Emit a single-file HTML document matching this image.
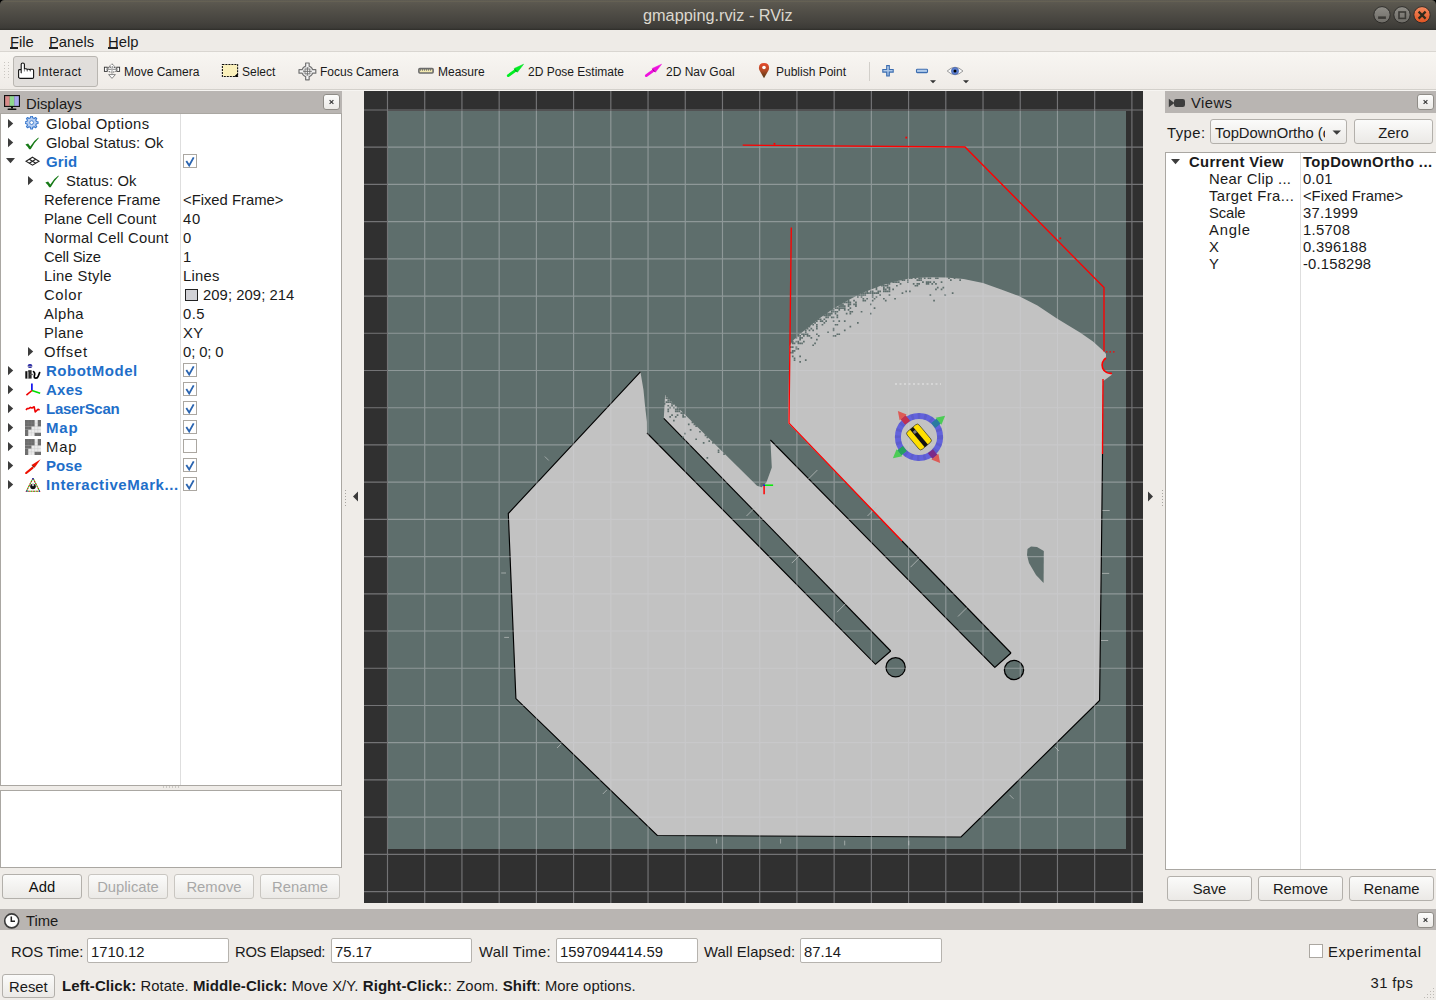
<!DOCTYPE html>
<html><head><meta charset="utf-8"><title>RViz</title>
<style>
html,body{margin:0;padding:0;}
body{width:1436px;height:1000px;position:relative;overflow:hidden;background:#efece8;font-family:"Liberation Sans",sans-serif;color:#1a1a1a;font-size:14.8px;}
.a{position:absolute;}
.t{position:absolute;white-space:nowrap;line-height:1;}
.btn{position:absolute;box-sizing:border-box;border:1px solid #b3b0ab;border-radius:3px;background:linear-gradient(#fbfbfa,#ebe9e6);}
.inp{position:absolute;box-sizing:border-box;border:1px solid #b6b3ae;border-radius:2px;background:#fff;}
.hdr{position:absolute;background:#b9b5b2;}
.cb{position:absolute;box-sizing:border-box;width:14px;height:14px;border:1px solid #aba7a1;background:#fff;}
</style></head><body>
<div class="a" style="left:0;top:0;width:1436px;height:30px;background:linear-gradient(#5f5c53 0px,#57544c 6px,#45433e 22px,#3c3b37 28px,#2f2e2a 30px);"></div>
<div class="a" style="left:3px;top:1px;width:1430px;height:1px;background:#6a6656;opacity:.6"></div>
<svg class="a" style="left:0;top:0" width="1436" height="6"><path d="M0 0 H4.5 A4.5 4.5 0 0 0 0 4.5 Z" fill="#000"/><path d="M1431.5 0 H1436 V4.5 A4.5 4.5 0 0 0 1431.5 0 Z" fill="#000"/></svg>
<div class="t" style="left:643px;top:6.5px;font-size:16.3px;color:#dcd8cf;">gmapping.rviz - RViz</div>
<svg class="a" style="left:1370px;top:3px" width="64" height="24" viewBox="0 0 64 24">
  <defs>
    <linearGradient id="gb" x1="0" y1="0" x2="0" y2="1"><stop offset="0" stop-color="#8e8c86"/><stop offset="1" stop-color="#6e6c67"/></linearGradient>
    <linearGradient id="gr" x1="0" y1="0" x2="0" y2="1"><stop offset="0" stop-color="#f58a5f"/><stop offset="1" stop-color="#df5321"/></linearGradient>
  </defs>
  <circle cx="12" cy="11.8" r="8.2" fill="url(#gb)" stroke="#2e2d2a" stroke-width="1"/>
  <rect x="8.1" y="13.4" width="7.8" height="2.5" fill="#3b3a36"/>
  <circle cx="32" cy="11.8" r="8.2" fill="url(#gb)" stroke="#2e2d2a" stroke-width="1"/>
  <rect x="29" y="9" width="6.4" height="6.4" fill="none" stroke="#3b3a36" stroke-width="1.6"/>
  <circle cx="52" cy="11.8" r="8.2" fill="url(#gr)" stroke="#2e2d2a" stroke-width="1"/>
  <path d="M48.6 8.6 L55.6 15.6 M55.6 8.6 L48.6 15.6" stroke="#2f2a1c" stroke-width="2.2"/>
</svg>
<div class="a" style="left:0;top:30px;width:1436px;height:21px;background:#eeebe7;"></div>
<div class="a" style="left:0;top:51px;width:1436px;height:1px;background:#d9d6d1;"></div>
<div class="a" style="left:0;top:52px;width:1436px;height:37px;background:linear-gradient(#f8f6f2,#efebe7);"></div>
<div class="a" style="left:0;top:90px;width:1436px;height:1px;background:#f7f5f2;"></div>
<div class="a" style="left:0;top:89px;width:1436px;height:1px;background:#d3d0cb;"></div>
<div class="t" style="left:10px;top:35px;font-size:14.8px;">File</div>
<div class="a" style="left:10px;top:47px;width:8px;height:1.5px;background:#222"></div>
<div class="t" style="left:49px;top:35px;font-size:14.8px;">Panels</div>
<div class="a" style="left:49px;top:47px;width:9px;height:1.5px;background:#222"></div>
<div class="t" style="left:108px;top:35px;font-size:14.8px;">Help</div>
<div class="a" style="left:108px;top:47px;width:10px;height:1.5px;background:#222"></div>
<!-- toolbar handle dots -->
<svg class="a" style="left:4px;top:62px" width="6" height="18"><g fill="#c9c6c1">
<rect x="0" y="0" width="1" height="1"/><rect x="4" y="0" width="1" height="1"/>
<rect x="0" y="3" width="1" height="1"/><rect x="4" y="3" width="1" height="1"/>
<rect x="0" y="6" width="1" height="1"/><rect x="4" y="6" width="1" height="1"/>
<rect x="0" y="9" width="1" height="1"/><rect x="4" y="9" width="1" height="1"/>
<rect x="0" y="12" width="1" height="1"/><rect x="4" y="12" width="1" height="1"/>
<rect x="0" y="15" width="1" height="1"/><rect x="4" y="15" width="1" height="1"/>
</g></svg>
<div class="a" style="left:13px;top:56px;width:85px;height:31px;box-sizing:border-box;border:1px solid #b9b6b1;border-radius:3px;background:#e1dedb;"></div>
<!-- toolbar icons -->
<svg class="a" style="left:14px;top:58px" width="30" height="26" viewBox="0 0 30 26">
  <path d="M7.2 15 V6.2 Q7.2 5 8.8 5 Q10.4 5 10.4 6.2 V10.8 H12.2 Q13.2 10.8 13.2 12 V11.2 H15.2 Q16.2 11.2 16.2 12.2 V11.2 H18.4 Q19.6 11.2 19.6 12.5 V19.3 Q19.6 20.4 18.4 20.4 H6.4 Q5.6 20.4 4.6 19.3 V12.5 Q4.6 11.6 5.6 11.6 H7.2" fill="#fff" stroke="#111" stroke-width="1.1" stroke-linejoin="round"/>
  <path d="M7.4 11.6 V15.5 M10.4 10.8 V13.5 M13.3 11.5 V13.6 M16.3 11.5 V13.6" stroke="#555" stroke-width="0.7"/>
</svg>
<div class="t" style="left:38px;top:66px;font-size:12px;letter-spacing:0.45px;">Interact</div>
<svg class="a" style="left:100px;top:58px" width="30" height="26" viewBox="0 0 30 26">
  <path d="M12 5.8 L15.6 9.3 H8.4 Z" fill="#fff" stroke="#444" stroke-width="0.9" stroke-dasharray="1.2 0.7"/>
  <rect x="4.4" y="9.2" width="2.8" height="4.2" fill="#fff" stroke="#333" stroke-width="0.9"/>
  <rect x="16.8" y="9.2" width="2.8" height="4.2" fill="#fff" stroke="#333" stroke-width="0.9"/>
  <ellipse cx="12" cy="11.6" rx="4.8" ry="2.5" fill="#fff" stroke="#333" stroke-width="0.9" stroke-dasharray="1.2 0.7"/>
  <path d="M7.2 11.3 H16.8" stroke="#666" stroke-width="0.8"/>
  <path d="M12 9.6 V16.4" stroke="#b5b5b5" stroke-width="1.3"/>
  <path d="M8.6 16.6 H15.4 L12 20.4 Z" fill="#fff" stroke="#777" stroke-width="0.9"/>
</svg>
<div class="t" style="left:124px;top:66px;font-size:12px;">Move Camera</div>
<svg class="a" style="left:216px;top:58px" width="30" height="26" viewBox="0 0 30 26">
  <rect x="6.4" y="6.5" width="15.2" height="12" fill="#fbf1bc" stroke="#111" stroke-width="1.1" stroke-dasharray="2 1"/>
  <path d="M21.8 15 V18.8 H18 Z" fill="#000"/>
</svg>
<div class="t" style="left:242px;top:66px;font-size:12px;">Select</div>
<svg class="a" style="left:294px;top:58px" width="30" height="26" viewBox="0 0 30 26">
  <path d="M18.61 11.65 L21.80 11.65 L21.80 15.15 L18.61 15.15 L18.28 15.93 L17.84 16.65 L17.29 17.29 L16.65 17.84 L15.93 18.28 L15.15 18.61 L15.15 21.80 L11.65 21.80 L11.65 18.61 L10.87 18.28 L10.15 17.84 L9.51 17.29 L8.96 16.65 L8.52 15.93 L8.19 15.15 L5.00 15.15 L5.00 11.65 L8.19 11.65 L8.52 10.87 L8.96 10.15 L9.51 9.51 L10.15 8.96 L10.87 8.52 L11.65 8.19 L11.65 5.00 L15.15 5.00 L15.15 8.19 L15.93 8.52 L16.65 8.96 L17.29 9.51 L17.84 10.15 L18.28 10.87 Z" fill="#f6f6f6" stroke="#727272" stroke-width="1.2" stroke-linejoin="round"/>
  <circle cx="13.4" cy="13.4" r="4" fill="none" stroke="#9a9a9a" stroke-width="0.8" stroke-dasharray="0.9 0.7"/>
  <path d="M11 11 h4.8 v4.8 h-4.8 z M13.4 9.2 v8.4 M9.2 13.4 h8.4" fill="none" stroke="#6e6e6e" stroke-width="0.9"/>
</svg>
<div class="t" style="left:320px;top:66px;font-size:12px;">Focus Camera</div>
<svg class="a" style="left:412px;top:58px" width="30" height="26" viewBox="0 0 30 26">
  <rect x="6.9" y="10.6" width="14.2" height="4.4" rx="1" fill="#f1e8b0" stroke="#6b6b6b" stroke-width="1.6"/>
  <path d="M8.5 11 v1.8 M10.5 11 v1.8 M12.5 11 v1.8 M14.5 11 v1.8 M16.5 11 v1.8 M18.5 11 v1.8" stroke="#6b6b6b" stroke-width="0.8"/>
</svg>
<div class="t" style="left:438px;top:66px;font-size:12px;">Measure</div>
<svg class="a" style="left:502px;top:58px" width="30" height="26" viewBox="0 0 30 26">
  <path d="M6.3 17.6 L13.6 12.4" stroke="#00ee22" stroke-width="2.8" stroke-linecap="round"/>
  <path d="M21.6 6.2 L15.4 14.3 L12.1 10.5 Z" fill="#00ee22" stroke="#00dd22" stroke-width="0.5"/>
  <path d="M12.5 11.2 L15 13.8" stroke="#0a7a1a" stroke-width="1"/>
</svg>
<div class="t" style="left:528px;top:66px;font-size:12px;">2D Pose Estimate</div>
<svg class="a" style="left:640px;top:58px" width="30" height="26" viewBox="0 0 30 26">
  <path d="M6.3 17.6 L13.6 12.4" stroke="#ee11dd" stroke-width="2.8" stroke-linecap="round"/>
  <path d="M21.6 6.2 L15.4 14.3 L12.1 10.5 Z" fill="#ee11dd" stroke="#ee11dd" stroke-width="0.5"/>
  <path d="M12.5 11.2 L15 13.8" stroke="#8a0a7a" stroke-width="1"/>
</svg>
<div class="t" style="left:666px;top:66px;font-size:12px;">2D Nav Goal</div>
<svg class="a" style="left:752px;top:58px" width="30" height="26" viewBox="0 0 30 26">
  <defs><linearGradient id="pin" x1="0" y1="0" x2="0" y2="1"><stop offset="0" stop-color="#e84a2c"/><stop offset="0.5" stop-color="#b24a26"/><stop offset="1" stop-color="#4a3510"/></linearGradient></defs>
  <path d="M12 20.3 L7.6 12.5 Q6.9 11.2 6.9 9.9 Q6.9 4.9 12 4.9 Q17.1 4.9 17.1 9.9 Q17.1 11.2 16.4 12.5 Z" fill="url(#pin)"/>
  <circle cx="12" cy="9.5" r="1.8" fill="#fff"/>
</svg>
<div class="t" style="left:776px;top:66px;font-size:12px;">Publish Point</div>
<div class="a" style="left:869px;top:62px;width:1px;height:19px;background:#d2cfca"></div>
<svg class="a" style="left:876px;top:58px" width="100" height="30" viewBox="0 0 100 30">
  <defs><linearGradient id="bl" x1="0" y1="0" x2="0" y2="1"><stop offset="0" stop-color="#c9dcf2"/><stop offset="1" stop-color="#8fb2de"/></linearGradient></defs>
  <path d="M11.4 7.6 h2.6 v3.9 h3.9 v2.6 h-3.9 v3.9 h-2.6 v-3.9 h-3.9 v-2.6 h3.9 z" fill="url(#bl)" stroke="#3c6db0" stroke-width="1.1" transform="translate(-0.7,0)"/>
  <rect x="40.5" y="11.3" width="11" height="3.3" rx="0.8" fill="url(#bl)" stroke="#3c6db0" stroke-width="1.1"/>
  <path d="M54 22.2 h6 l-3 3 z" fill="#333"/>
  <path d="M71.2 13 Q79 5.5 87 13 Q79 20.5 71.2 13 Z" fill="#f8f8f8" stroke="#9a9a9a" stroke-width="1"/>
  <circle cx="79" cy="13" r="3.6" fill="#5b7fd0" stroke="#3a5aa8" stroke-width="0.6"/>
  <circle cx="79" cy="13" r="1.5" fill="#000"/>
  <path d="M87 22.2 h6 l-3 3 z" fill="#333"/>
</svg>
<div class="hdr" style="left:0;top:91px;width:342px;height:22px;"></div>
<svg class="a" style="left:3px;top:94px" width="18" height="18" viewBox="0 0 18 18"><rect x="1.5" y="1.5" width="15" height="11" fill="#444" stroke="#111" stroke-width="1"/><rect x="2.2" y="2.2" width="4.5" height="9.6" fill="#d88a8a"/><rect x="6.7" y="2.2" width="4.6" height="9.6" fill="#8fd88f"/><rect x="11.3" y="2.2" width="4.5" height="9.6" fill="#a8a8ee"/><rect x="8" y="12.5" width="2" height="2" fill="#111"/><rect x="4.5" y="14.5" width="9" height="1.6" rx="0.8" fill="#111"/></svg>
<div class="t" style="left:26px;top:96.5px;font-size:14.8px;">Displays</div>
<svg width="0" height="0" style="position:absolute"><defs><linearGradient id="cbg" x1="0" y1="0" x2="0" y2="1"><stop offset="0" stop-color="#fdfdfc"/><stop offset="1" stop-color="#ebe9e6"/></linearGradient></defs></svg>
<svg class="a" style="left:322.5px;top:93.5px" width="17" height="16"><rect x="0.5" y="0.5" width="16" height="15" rx="2.5" fill="url(#cbg)" stroke="#8f8c87" stroke-width="1"/><path d="M6.6 6.1 L10.4 9.9 M10.4 6.1 L6.6 9.9" stroke="#3a3a3a" stroke-width="1.15"/></svg>
<div class="a" style="left:0;top:113px;width:342px;height:673px;box-sizing:border-box;border:1px solid #aaa7a2;background:#fff;"></div>
<div class="a" style="left:180px;top:114px;width:1px;height:671px;background:#dedede;"></div>
<svg class="a" style="left:8px;top:118.9px" width="6" height="10"><path d="M0 0 L5.2 4.6 L0 9.2 Z" fill="#3c3c3c"/></svg>
<svg class="a" style="left:25px;top:115.5px" width="16" height="16" viewBox="0 0 16 16"><g transform="translate(6.6,6.6)"><path d="M4.78 -1.07 L6.45 -0.84 L6.45 0.84 L4.78 1.07 L4.14 2.63 L5.15 3.96 L3.96 5.15 L2.63 4.14 L1.07 4.78 L0.84 6.45 L-0.84 6.45 L-1.07 4.78 L-2.63 4.14 L-3.96 5.15 L-5.15 3.96 L-4.14 2.63 L-4.78 1.07 L-6.45 0.84 L-6.45 -0.84 L-4.78 -1.07 L-4.14 -2.63 L-5.15 -3.96 L-3.96 -5.15 L-2.63 -4.14 L-1.07 -4.78 L-0.84 -6.45 L0.84 -6.45 L1.07 -4.78 L2.63 -4.14 L3.96 -5.15 L5.15 -3.96 L4.14 -2.63 Z" fill="#b7cff2" stroke="#3a78cc" stroke-width="1.1" stroke-linejoin="round"/><circle r="1.9" fill="#fff" stroke="#3a78cc" stroke-width="0.9"/></g></svg>
<div class="t" style="left:46px;top:117.0px;letter-spacing:0.40px;">Global Options</div>
<svg class="a" style="left:8px;top:137.9px" width="6" height="10"><path d="M0 0 L5.2 4.6 L0 9.2 Z" fill="#3c3c3c"/></svg>
<svg class="a" style="left:25px;top:134.5px" width="16" height="16" viewBox="0 0 16 16"><path d="M0.4 9.6 Q1.8 9.0 3.1 8.4 L5.3 11.4 Q8.6 5.6 13.4 2.4 L13.7 3.2 Q9.3 7.4 5.7 14.2 Q5.0 14.3 4.2 14.3 Q2.6 11.6 0.4 9.6 Z" fill="#177a17"/></svg>
<div class="t" style="left:46px;top:136.0px;letter-spacing:0.09px;">Global Status: Ok</div>
<svg class="a" style="left:6px;top:158.3px" width="10" height="6"><path d="M0 0 L9 0 L4.5 5.2 Z" fill="#3c3c3c"/></svg>
<svg class="a" style="left:25px;top:153.5px" width="16" height="16" viewBox="0 0 16 16"><g fill="none" stroke="#222" stroke-width="1.1"><path d="M7.5 3.2 L14 7.2 L7.5 11.2 L1 7.2 Z"/><path d="M4.25 5.2 L10.75 9.2 M10.75 5.2 L4.25 9.2"/></g></svg>
<div class="t" style="left:46px;top:153.9px;font-weight:bold;color:#1f6fc9;font-size:15px;letter-spacing:0.07px;">Grid</div>
<div class="cb" style="left:183px;top:154.2px;"></div>
<svg class="a" style="left:185px;top:156.9px" width="11" height="11"><path d="M1.3 4.0 L4.2 8.4 L8.7 0.4" fill="none" stroke="#2a64b0" stroke-width="1.8"/></svg>
<svg class="a" style="left:28px;top:175.9px" width="6" height="10"><path d="M0 0 L5.2 4.6 L0 9.2 Z" fill="#3c3c3c"/></svg>
<svg class="a" style="left:45px;top:172.5px" width="16" height="16" viewBox="0 0 16 16"><path d="M0.4 9.6 Q1.8 9.0 3.1 8.4 L5.3 11.4 Q8.6 5.6 13.4 2.4 L13.7 3.2 Q9.3 7.4 5.7 14.2 Q5.0 14.3 4.2 14.3 Q2.6 11.6 0.4 9.6 Z" fill="#177a17"/></svg>
<div class="t" style="left:66px;top:174.0px;letter-spacing:0.16px;">Status: Ok</div>
<div class="t" style="left:44px;top:193.0px;letter-spacing:0.09px;">Reference Frame</div>
<div class="t" style="left:183px;top:193.0px;letter-spacing:0.00px;">&lt;Fixed Frame&gt;</div>
<div class="t" style="left:44px;top:212.0px;letter-spacing:0.09px;">Plane Cell Count</div>
<div class="t" style="left:183px;top:212.0px;letter-spacing:0.80px;">40</div>
<div class="t" style="left:44px;top:231.0px;letter-spacing:0.22px;">Normal Cell Count</div>
<div class="t" style="left:183px;top:231.0px;letter-spacing:0.00px;">0</div>
<div class="t" style="left:44px;top:250.0px;letter-spacing:-0.19px;">Cell Size</div>
<div class="t" style="left:183px;top:250.0px;letter-spacing:0.00px;">1</div>
<div class="t" style="left:44px;top:269.0px;letter-spacing:0.28px;">Line Style</div>
<div class="t" style="left:183px;top:269.0px;letter-spacing:0.27px;">Lines</div>
<div class="t" style="left:44px;top:288.0px;letter-spacing:0.68px;">Color</div>
<div class="a" style="left:185px;top:288.5px;width:13px;height:12px;box-sizing:border-box;border:1px solid #222;background:#d1d1d6;"></div>
<div class="t" style="left:203px;top:288.0px;letter-spacing:0.07px;">209; 209; 214</div>
<div class="t" style="left:44px;top:307.0px;letter-spacing:0.43px;">Alpha</div>
<div class="t" style="left:183px;top:307.0px;letter-spacing:0.50px;">0.5</div>
<div class="t" style="left:44px;top:326.0px;letter-spacing:0.38px;">Plane</div>
<div class="t" style="left:183px;top:326.0px;letter-spacing:0.30px;">XY</div>
<svg class="a" style="left:28px;top:346.9px" width="6" height="10"><path d="M0 0 L5.2 4.6 L0 9.2 Z" fill="#3c3c3c"/></svg>
<div class="t" style="left:44px;top:345.0px;letter-spacing:0.80px;">Offset</div>
<div class="t" style="left:183px;top:345.0px;letter-spacing:-0.10px;">0; 0; 0</div>
<svg class="a" style="left:8px;top:365.9px" width="6" height="10"><path d="M0 0 L5.2 4.6 L0 9.2 Z" fill="#3c3c3c"/></svg>
<svg class="a" style="left:25px;top:362.5px" width="16" height="16" viewBox="0 0 16 16"><ellipse cx="5" cy="3" rx="2.4" ry="1.9" fill="#1a1aa0"/><path d="M2.8 3.3 H7.3" stroke="#e8e6c8" stroke-width="0.7"/><rect x="0.3" y="8.2" width="2.2" height="7.4" fill="#111"/><rect x="3.2" y="7.2" width="3.4" height="8.4" fill="#2a2a2a"/><rect x="2.6" y="9" width="0.8" height="6.4" fill="#bbb"/><path d="M5 11.5 H7.8" stroke="#555" stroke-width="1.2"/><path d="M8.6 8.6 Q10 9.6 9.6 11.8 Q8.8 14.6 10 15 Q12.4 15.6 13.2 13.2 L14.6 9.6" fill="none" stroke="#000" stroke-width="1.7" stroke-linecap="round"/></svg>
<div class="t" style="left:46px;top:362.9px;font-weight:bold;color:#1f6fc9;font-size:15px;letter-spacing:0.51px;">RobotModel</div>
<div class="cb" style="left:183px;top:363.2px;"></div>
<svg class="a" style="left:185px;top:365.9px" width="11" height="11"><path d="M1.3 4.0 L4.2 8.4 L8.7 0.4" fill="none" stroke="#2a64b0" stroke-width="1.8"/></svg>
<svg class="a" style="left:8px;top:384.9px" width="6" height="10"><path d="M0 0 L5.2 4.6 L0 9.2 Z" fill="#3c3c3c"/></svg>
<svg class="a" style="left:25px;top:381.5px" width="16" height="16" viewBox="0 0 16 16"><path d="M6.9 1.5 V8.5" stroke="#0000ee" stroke-width="1.6"/><path d="M6.9 8.5 L15.2 11.2" stroke="#00dd00" stroke-width="1.6"/><path d="M6.9 8.5 L1.4 13.2" stroke="#ee0000" stroke-width="1.6"/></svg>
<div class="t" style="left:46px;top:381.9px;font-weight:bold;color:#1f6fc9;font-size:15px;letter-spacing:0.23px;">Axes</div>
<div class="cb" style="left:183px;top:382.2px;"></div>
<svg class="a" style="left:185px;top:384.9px" width="11" height="11"><path d="M1.3 4.0 L4.2 8.4 L8.7 0.4" fill="none" stroke="#2a64b0" stroke-width="1.8"/></svg>
<svg class="a" style="left:8px;top:403.9px" width="6" height="10"><path d="M0 0 L5.2 4.6 L0 9.2 Z" fill="#3c3c3c"/></svg>
<svg class="a" style="left:25px;top:400.5px" width="16" height="16" viewBox="0 0 16 16"><path d="M1 9 L2.2 7.6 L4 7.4 L5.4 6.4 L7 7 L9.2 5.8 L10.2 10.9 L11.6 9.6 L13 8.2 L14.6 9" fill="none" stroke="#ee0000" stroke-width="1.6" stroke-linejoin="round"/></svg>
<div class="t" style="left:46px;top:400.9px;font-weight:bold;color:#1f6fc9;font-size:15px;letter-spacing:-0.28px;">LaserScan</div>
<div class="cb" style="left:183px;top:401.2px;"></div>
<svg class="a" style="left:185px;top:403.9px" width="11" height="11"><path d="M1.3 4.0 L4.2 8.4 L8.7 0.4" fill="none" stroke="#2a64b0" stroke-width="1.8"/></svg>
<svg class="a" style="left:8px;top:422.9px" width="6" height="10"><path d="M0 0 L5.2 4.6 L0 9.2 Z" fill="#3c3c3c"/></svg>
<svg class="a" style="left:25px;top:419.5px" width="16" height="16" viewBox="0 0 16 16"><rect x="0" y="0" width="16" height="16" fill="#ebebeb"/><g fill="#6d6d6d"><rect x="0" y="0" width="9.6" height="6.4"/><rect x="12.8" y="0" width="3.2" height="6.4"/><rect x="0" y="6.4" width="6.4" height="3.2"/><rect x="0" y="9.6" width="3.2" height="6.4"/><rect x="9.6" y="12.8" width="6.4" height="3.2"/></g><g stroke="#999" stroke-width="0.3" opacity="0.6"><path d="M3.2 0V16M6.4 0V16M9.6 0V16M12.8 0V16M0 3.2H16M0 6.4H16M0 9.6H16M0 12.8H16"/></g></svg>
<div class="t" style="left:46px;top:419.9px;font-weight:bold;color:#1f6fc9;font-size:15px;letter-spacing:0.80px;">Map</div>
<div class="cb" style="left:183px;top:420.2px;"></div>
<svg class="a" style="left:185px;top:422.9px" width="11" height="11"><path d="M1.3 4.0 L4.2 8.4 L8.7 0.4" fill="none" stroke="#2a64b0" stroke-width="1.8"/></svg>
<svg class="a" style="left:8px;top:441.9px" width="6" height="10"><path d="M0 0 L5.2 4.6 L0 9.2 Z" fill="#3c3c3c"/></svg>
<svg class="a" style="left:25px;top:438.5px" width="16" height="16" viewBox="0 0 16 16"><rect x="0" y="0" width="16" height="16" fill="#ebebeb"/><g fill="#6d6d6d"><rect x="0" y="0" width="9.6" height="6.4"/><rect x="12.8" y="0" width="3.2" height="6.4"/><rect x="0" y="6.4" width="6.4" height="3.2"/><rect x="0" y="9.6" width="3.2" height="6.4"/><rect x="9.6" y="12.8" width="6.4" height="3.2"/></g><g stroke="#999" stroke-width="0.3" opacity="0.6"><path d="M3.2 0V16M6.4 0V16M9.6 0V16M12.8 0V16M0 3.2H16M0 6.4H16M0 9.6H16M0 12.8H16"/></g></svg>
<div class="t" style="left:46px;top:440.0px;letter-spacing:0.80px;">Map</div>
<div class="cb" style="left:183px;top:439.2px;"></div>
<svg class="a" style="left:8px;top:460.9px" width="6" height="10"><path d="M0 0 L5.2 4.6 L0 9.2 Z" fill="#3c3c3c"/></svg>
<svg class="a" style="left:25px;top:457.5px" width="16" height="16" viewBox="0 0 16 16"><path d="M1.2 15 L7.5 9.8" stroke="#ee1100" stroke-width="2.2" stroke-linecap="round"/><path d="M15.6 1.3 L9.8 9.6 L6.6 7 Z" fill="#ee1100"/><path d="M6.8 7.4 L9.4 9.3" stroke="#661100" stroke-width="1"/></svg>
<div class="t" style="left:46px;top:457.9px;font-weight:bold;color:#1f6fc9;font-size:15px;letter-spacing:0.07px;">Pose</div>
<div class="cb" style="left:183px;top:458.2px;"></div>
<svg class="a" style="left:185px;top:460.9px" width="11" height="11"><path d="M1.3 4.0 L4.2 8.4 L8.7 0.4" fill="none" stroke="#2a64b0" stroke-width="1.8"/></svg>
<svg class="a" style="left:8px;top:479.9px" width="6" height="10"><path d="M0 0 L5.2 4.6 L0 9.2 Z" fill="#3c3c3c"/></svg>
<svg class="a" style="left:25px;top:476.5px" width="16" height="16" viewBox="0 0 16 16"><path d="M8 1.2 L14.6 14.2 H1.4 Z" fill="none" stroke="#dd0000" stroke-width="1.1" stroke-dasharray="1.5 1.2"/><path d="M8 1.2 L14.6 14.2 H1.4 Z" fill="none" stroke="#00cc00" stroke-width="1.1" stroke-dasharray="1.2 1.5" stroke-dashoffset="1.5"/><circle cx="8" cy="9.5" r="2.8" fill="#111"/><circle cx="8" cy="8" r="1.2" fill="#bbb"/><path d="M8 1 v1.5 M1.5 14.2 h1 M14 14.2 h1" stroke="#0022ee" stroke-width="1.2"/></svg>
<div class="t" style="left:46px;top:476.9px;font-weight:bold;color:#1f6fc9;font-size:15px;letter-spacing:0.56px;">InteractiveMark...</div>
<div class="cb" style="left:183px;top:477.2px;"></div>
<svg class="a" style="left:185px;top:479.9px" width="11" height="11"><path d="M1.3 4.0 L4.2 8.4 L8.7 0.4" fill="none" stroke="#2a64b0" stroke-width="1.8"/></svg>
<svg class="a" style="left:163px;top:786px" width="18" height="3"><g fill="#a8a5a0"><rect x="0" y="0.5" width="1" height="1"/><rect x="3" y="0.5" width="1" height="1"/><rect x="6" y="0.5" width="1" height="1"/><rect x="9" y="0.5" width="1" height="1"/><rect x="12" y="0.5" width="1" height="1"/><rect x="15" y="0.5" width="1" height="1"/></g></svg>
<div class="a" style="left:0;top:790px;width:342px;height:78px;box-sizing:border-box;border:1px solid #aaa7a2;background:#fff;"></div>
<div class="btn" style="left:2px;top:874px;width:80px;height:25px;"></div>
<div class="t" style="left:2px;top:880px;width:80px;text-align:center;color:#111;">Add</div>
<div class="btn" style="left:88px;top:874px;width:80px;height:25px;border-color:#c9c6c1;"></div>
<div class="t" style="left:88px;top:880px;width:80px;text-align:center;color:#a8a8a8;">Duplicate</div>
<div class="btn" style="left:174px;top:874px;width:80px;height:25px;border-color:#c9c6c1;"></div>
<div class="t" style="left:174px;top:880px;width:80px;text-align:center;color:#a8a8a8;">Remove</div>
<div class="btn" style="left:260px;top:874px;width:80px;height:25px;border-color:#c9c6c1;"></div>
<div class="t" style="left:260px;top:880px;width:80px;text-align:center;color:#a8a8a8;">Rename</div>
<svg class="a" style="left:344px;top:488px" width="16" height="20"><g fill="#a8a5a0"><rect x="1" y="2" width="1" height="1"/><rect x="1" y="5" width="1" height="1"/><rect x="1" y="8" width="1" height="1"/><rect x="1" y="11" width="1" height="1"/><rect x="1" y="14" width="1" height="1"/><rect x="1" y="17" width="1" height="1"/></g><path d="M9 8.5 L14 3.5 L14 13.5 Z" fill="#3a3a3a"/></svg>
<svg class="a" style="left:364px;top:91px" width="779" height="812" viewBox="0 0 779 812">
<defs><pattern id="hatch" width="3" height="3" patternUnits="userSpaceOnUse"><rect width="3" height="3" fill="#c2c2c2"/><rect x="0" y="0" width="1" height="1" fill="#5e6e6c"/></pattern></defs>
<rect width="779" height="812" fill="#303030"/>
<rect x="24" y="20" width="738" height="738" fill="#5e6e6c"/>
<path d="M144.3 422.5 L276.4 280.8 L279.5 299.0 L281.0 314.5 L282.9 330.7 L283.0 342.0 L511.5 573.3 L526.7 560.0 L299.8 327.3 L301.1 304.0 L393.0 394.8 L397.6 396.2 L402.4 391.5 L407.8 376.6 L406.4 349.0 L630.8 576.5 L647.0 562.0 L424.0 332.1 L425.5 255.0 L429.0 249.5 L436.0 243.0 L443.0 237.5 L456.0 227.0 L470.0 217.2 L484.0 209.2 L497.0 202.4 L516.0 194.9 L529.9 190.7 L546.6 187.2 L564.7 186.3 L581.5 186.5 L599.6 187.9 L619.0 192.1 L637.2 198.4 L655.3 205.3 L673.4 214.4 L692.9 227.6 L716.0 241.5 L729.0 250.5 L740.0 260.4 L742.0 263.0 L742.0 267.0 L740.7 268.1 L739.7 269.3 L738.9 270.7 L738.4 272.3 L738.2 273.9 L738.3 275.5 L738.8 277.0 L739.5 278.5 L740.5 279.8 L741.8 280.8 L743.2 281.6 L744.7 282.1 L746.3 282.3 L747.9 282.2 L747.5 284.0 L740.0 289.5 L739.0 290.0 L738.5 363.0 L737.8 429.0 L735.6 609.4 L597.0 746.0 L293.3 744.5 L151.9 607.6 Z" fill="#c2c2c2"/>
<path d="M663.5 458.0 L667.0 455.5 L673.0 456.0 L679.8 460.0 L679.6 492.0 L672.0 484.0 L665.0 472.0 L663.0 464.0 Z" fill="#5e6e6c"/>
<circle cx="531.6" cy="576.3" r="9.6" fill="#5e6e6c" stroke="#000" stroke-width="1.3"/>
<circle cx="650.0" cy="579.0" r="9.6" fill="#5e6e6c" stroke="#000" stroke-width="1.3"/>
<path d="M276.4 280.8 L144.3 422.5 L151.9 607.6 L293.3 744.5 L597.0 746.0 L735.6 609.4 L737.8 429.0 L738.5 363.0" fill="none" stroke="#000" stroke-width="1.15" stroke-linejoin="miter"/>
<path d="M283.0 342.0 L511.5 573.3 L526.7 560.0" fill="none" stroke="#000" stroke-width="1.15" stroke-linejoin="miter"/>
<path d="M299.8 327.3 L526.7 560.0" fill="none" stroke="#000" stroke-width="1.15" stroke-linejoin="miter"/>
<path d="M406.4 349.0 L630.8 576.5 L647.0 562.0" fill="none" stroke="#000" stroke-width="1.15" stroke-linejoin="miter"/>
<path d="M538.0 450.0 L647.0 562.0" fill="none" stroke="#000" stroke-width="1.15" stroke-linejoin="miter"/>
<path d="M545.0 186.4h1.7v1.7h-1.7z M546.9 186.4h1.7v1.7h-1.7z M550.6 186.4h1.7v1.7h-1.7z M554.3 186.4h1.7v1.7h-1.7z M556.2 186.4h1.7v1.7h-1.7z M559.9 186.4h1.7v1.7h-1.7z M563.6 186.4h1.7v1.7h-1.7z M565.5 186.4h1.7v1.7h-1.7z M571.1 186.4h1.7v1.7h-1.7z M572.9 186.4h1.7v1.7h-1.7z M584.1 186.4h1.7v1.7h-1.7z M589.7 186.4h1.7v1.7h-1.7z M537.6 188.3h1.7v1.7h-1.7z M539.5 188.3h1.7v1.7h-1.7z M543.2 188.3h1.7v1.7h-1.7z M552.5 188.3h1.7v1.7h-1.7z M554.3 188.3h1.7v1.7h-1.7z M556.2 188.3h1.7v1.7h-1.7z M586.0 188.3h1.7v1.7h-1.7z M595.3 188.3h1.7v1.7h-1.7z M528.3 190.2h1.7v1.7h-1.7z M530.2 190.2h1.7v1.7h-1.7z M532.0 190.2h1.7v1.7h-1.7z M533.9 190.2h1.7v1.7h-1.7z M543.2 190.2h1.7v1.7h-1.7z M558.1 190.2h1.7v1.7h-1.7z M561.8 190.2h1.7v1.7h-1.7z M563.6 190.2h1.7v1.7h-1.7z M565.5 190.2h1.7v1.7h-1.7z M569.2 190.2h1.7v1.7h-1.7z M576.7 190.2h1.7v1.7h-1.7z M522.7 192.0h1.7v1.7h-1.7z M524.6 192.0h1.7v1.7h-1.7z M535.7 192.0h1.7v1.7h-1.7z M548.8 192.0h1.7v1.7h-1.7z M552.5 192.0h1.7v1.7h-1.7z M554.3 192.0h1.7v1.7h-1.7z M561.8 192.0h1.7v1.7h-1.7z M563.6 192.0h1.7v1.7h-1.7z M567.4 192.0h1.7v1.7h-1.7z M571.1 192.0h1.7v1.7h-1.7z M517.1 193.9h1.7v1.7h-1.7z M519.0 193.9h1.7v1.7h-1.7z M520.9 193.9h1.7v1.7h-1.7z M522.7 193.9h1.7v1.7h-1.7z M532.0 193.9h1.7v1.7h-1.7z M550.6 193.9h1.7v1.7h-1.7z M552.5 193.9h1.7v1.7h-1.7z M511.6 195.7h1.7v1.7h-1.7z M519.0 195.7h1.7v1.7h-1.7z M522.7 195.7h1.7v1.7h-1.7z M524.6 195.7h1.7v1.7h-1.7z M572.9 195.7h1.7v1.7h-1.7z M578.5 195.7h1.7v1.7h-1.7z M511.6 197.6h1.7v1.7h-1.7z M519.0 197.6h1.7v1.7h-1.7z M520.9 197.6h1.7v1.7h-1.7z M524.6 197.6h1.7v1.7h-1.7z M528.3 197.6h1.7v1.7h-1.7z M571.1 197.6h1.7v1.7h-1.7z M576.7 197.6h1.7v1.7h-1.7z M502.3 199.5h1.7v1.7h-1.7z M506.0 199.5h1.7v1.7h-1.7z M507.8 199.5h1.7v1.7h-1.7z M513.4 199.5h1.7v1.7h-1.7z M515.3 199.5h1.7v1.7h-1.7z M519.0 199.5h1.7v1.7h-1.7z M520.9 199.5h1.7v1.7h-1.7z M522.7 199.5h1.7v1.7h-1.7z M524.6 199.5h1.7v1.7h-1.7z M541.3 199.5h1.7v1.7h-1.7z M545.0 199.5h1.7v1.7h-1.7z M496.7 201.3h1.7v1.7h-1.7z M498.5 201.3h1.7v1.7h-1.7z M500.4 201.3h1.7v1.7h-1.7z M502.3 201.3h1.7v1.7h-1.7z M504.1 201.3h1.7v1.7h-1.7z M506.0 201.3h1.7v1.7h-1.7z M507.8 201.3h1.7v1.7h-1.7z M509.7 201.3h1.7v1.7h-1.7z M511.6 201.3h1.7v1.7h-1.7z M513.4 201.3h1.7v1.7h-1.7z M537.6 201.3h1.7v1.7h-1.7z M587.8 201.3h1.7v1.7h-1.7z M493.0 203.2h1.7v1.7h-1.7z M494.8 203.2h1.7v1.7h-1.7z M496.7 203.2h1.7v1.7h-1.7z M498.5 203.2h1.7v1.7h-1.7z M500.4 203.2h1.7v1.7h-1.7z M507.8 203.2h1.7v1.7h-1.7z M515.3 203.2h1.7v1.7h-1.7z M524.6 203.2h1.7v1.7h-1.7z M565.5 203.2h1.7v1.7h-1.7z M580.4 203.2h1.7v1.7h-1.7z M493.0 205.0h1.7v1.7h-1.7z M496.7 205.0h1.7v1.7h-1.7z M507.8 205.0h1.7v1.7h-1.7z M511.6 205.0h1.7v1.7h-1.7z M498.5 206.9h1.7v1.7h-1.7z M502.3 206.9h1.7v1.7h-1.7z M509.7 206.9h1.7v1.7h-1.7z M519.0 206.9h1.7v1.7h-1.7z M530.2 206.9h1.7v1.7h-1.7z M483.7 208.8h1.7v1.7h-1.7z M489.2 208.8h1.7v1.7h-1.7z M498.5 208.8h1.7v1.7h-1.7z M500.4 208.8h1.7v1.7h-1.7z M507.8 208.8h1.7v1.7h-1.7z M520.9 208.8h1.7v1.7h-1.7z M569.2 208.8h1.7v1.7h-1.7z M479.9 210.6h1.7v1.7h-1.7z M481.8 210.6h1.7v1.7h-1.7z M483.7 210.6h1.7v1.7h-1.7z M485.5 210.6h1.7v1.7h-1.7z M491.1 210.6h1.7v1.7h-1.7z M476.2 212.5h1.7v1.7h-1.7z M478.1 212.5h1.7v1.7h-1.7z M483.7 212.5h1.7v1.7h-1.7z M485.5 212.5h1.7v1.7h-1.7z M489.2 212.5h1.7v1.7h-1.7z M491.1 212.5h1.7v1.7h-1.7z M506.0 212.5h1.7v1.7h-1.7z M474.4 214.3h1.7v1.7h-1.7z M476.2 214.3h1.7v1.7h-1.7z M478.1 214.3h1.7v1.7h-1.7z M479.9 214.3h1.7v1.7h-1.7z M483.7 214.3h1.7v1.7h-1.7z M491.1 214.3h1.7v1.7h-1.7z M470.6 216.2h1.7v1.7h-1.7z M472.5 216.2h1.7v1.7h-1.7z M474.4 216.2h1.7v1.7h-1.7z M476.2 216.2h1.7v1.7h-1.7z M478.1 216.2h1.7v1.7h-1.7z M479.9 216.2h1.7v1.7h-1.7z M485.5 216.2h1.7v1.7h-1.7z M509.7 216.2h1.7v1.7h-1.7z M466.9 218.1h1.7v1.7h-1.7z M468.8 218.1h1.7v1.7h-1.7z M474.4 218.1h1.7v1.7h-1.7z M479.9 218.1h1.7v1.7h-1.7z M483.7 218.1h1.7v1.7h-1.7z M466.9 219.9h1.7v1.7h-1.7z M468.8 219.9h1.7v1.7h-1.7z M470.6 219.9h1.7v1.7h-1.7z M472.5 219.9h1.7v1.7h-1.7z M485.5 219.9h1.7v1.7h-1.7z M487.4 219.9h1.7v1.7h-1.7z M496.7 219.9h1.7v1.7h-1.7z M461.3 221.8h1.7v1.7h-1.7z M463.2 221.8h1.7v1.7h-1.7z M465.1 221.8h1.7v1.7h-1.7z M466.9 221.8h1.7v1.7h-1.7z M470.6 221.8h1.7v1.7h-1.7z M481.8 221.8h1.7v1.7h-1.7z M485.5 221.8h1.7v1.7h-1.7z M506.0 221.8h1.7v1.7h-1.7z M459.5 223.6h1.7v1.7h-1.7z M461.3 223.6h1.7v1.7h-1.7z M463.2 223.6h1.7v1.7h-1.7z M465.1 223.6h1.7v1.7h-1.7z M472.5 223.6h1.7v1.7h-1.7z M461.3 225.5h1.7v1.7h-1.7z M463.2 225.5h1.7v1.7h-1.7z M466.9 225.5h1.7v1.7h-1.7z M468.8 225.5h1.7v1.7h-1.7z M472.5 225.5h1.7v1.7h-1.7z M453.9 227.4h1.7v1.7h-1.7z M455.8 227.4h1.7v1.7h-1.7z M459.5 227.4h1.7v1.7h-1.7z M452.0 229.2h1.7v1.7h-1.7z M455.8 229.2h1.7v1.7h-1.7z M457.6 229.2h1.7v1.7h-1.7z M461.3 229.2h1.7v1.7h-1.7z M468.8 229.2h1.7v1.7h-1.7z M474.4 229.2h1.7v1.7h-1.7z M479.9 229.2h1.7v1.7h-1.7z M450.2 231.1h1.7v1.7h-1.7z M459.5 231.1h1.7v1.7h-1.7z M493.0 231.1h1.7v1.7h-1.7z M448.3 232.9h1.7v1.7h-1.7z M452.0 232.9h1.7v1.7h-1.7z M457.6 232.9h1.7v1.7h-1.7z M470.6 232.9h1.7v1.7h-1.7z M472.5 232.9h1.7v1.7h-1.7z M444.6 234.8h1.7v1.7h-1.7z M452.0 234.8h1.7v1.7h-1.7z M485.5 234.8h1.7v1.7h-1.7z M442.7 236.7h1.7v1.7h-1.7z M446.5 236.7h1.7v1.7h-1.7z M452.0 236.7h1.7v1.7h-1.7z M468.8 236.7h1.7v1.7h-1.7z M440.9 238.5h1.7v1.7h-1.7z M444.6 238.5h1.7v1.7h-1.7z M448.3 238.5h1.7v1.7h-1.7z M468.8 238.5h1.7v1.7h-1.7z M479.9 238.5h1.7v1.7h-1.7z M440.9 240.4h1.7v1.7h-1.7z M463.2 240.4h1.7v1.7h-1.7z M437.2 242.2h1.7v1.7h-1.7z M439.0 242.2h1.7v1.7h-1.7z M440.9 242.2h1.7v1.7h-1.7z M442.7 242.2h1.7v1.7h-1.7z M452.0 242.2h1.7v1.7h-1.7z M472.5 242.2h1.7v1.7h-1.7z M474.4 242.2h1.7v1.7h-1.7z M433.4 244.1h1.7v1.7h-1.7z M435.3 244.1h1.7v1.7h-1.7z M439.0 244.1h1.7v1.7h-1.7z M442.7 244.1h1.7v1.7h-1.7z M444.6 244.1h1.7v1.7h-1.7z M453.9 244.1h1.7v1.7h-1.7z M468.8 244.1h1.7v1.7h-1.7z M470.6 244.1h1.7v1.7h-1.7z M431.6 246.0h1.7v1.7h-1.7z M435.3 246.0h1.7v1.7h-1.7z M437.2 246.0h1.7v1.7h-1.7z M446.5 246.0h1.7v1.7h-1.7z M435.3 247.8h1.7v1.7h-1.7z M452.0 247.8h1.7v1.7h-1.7z M427.9 249.7h1.7v1.7h-1.7z M431.6 249.7h1.7v1.7h-1.7z M433.4 249.7h1.7v1.7h-1.7z M439.0 249.7h1.7v1.7h-1.7z M427.9 251.5h1.7v1.7h-1.7z M429.7 251.5h1.7v1.7h-1.7z M433.4 251.5h1.7v1.7h-1.7z M435.3 251.5h1.7v1.7h-1.7z M437.2 251.5h1.7v1.7h-1.7z M450.2 251.5h1.7v1.7h-1.7z M448.3 253.4h1.7v1.7h-1.7z M426.0 255.3h1.7v1.7h-1.7z M427.9 255.3h1.7v1.7h-1.7z M431.6 255.3h1.7v1.7h-1.7z M431.6 257.1h1.7v1.7h-1.7z M433.4 257.1h1.7v1.7h-1.7z M427.9 259.0h1.7v1.7h-1.7z M429.7 259.0h1.7v1.7h-1.7z M426.0 260.8h1.7v1.7h-1.7z M427.9 260.8h1.7v1.7h-1.7z M427.9 264.6h1.7v1.7h-1.7z M435.3 264.6h1.7v1.7h-1.7z M429.7 266.4h1.7v1.7h-1.7z M429.7 268.3h1.7v1.7h-1.7z M440.9 268.3h1.7v1.7h-1.7z M435.3 270.1h1.7v1.7h-1.7z M301.6 304.6h1.7v1.7h-1.7z M301.6 306.4h1.7v1.7h-1.7z M303.4 306.4h1.7v1.7h-1.7z M303.4 308.3h1.7v1.7h-1.7z M305.3 308.3h1.7v1.7h-1.7z M301.6 310.2h1.7v1.7h-1.7z M303.4 310.2h1.7v1.7h-1.7z M305.3 310.2h1.7v1.7h-1.7z M307.2 310.2h1.7v1.7h-1.7z M299.7 312.0h1.7v1.7h-1.7z M307.2 312.0h1.7v1.7h-1.7z M309.0 312.0h1.7v1.7h-1.7z M303.4 313.9h1.7v1.7h-1.7z M307.2 313.9h1.7v1.7h-1.7z M310.9 313.9h1.7v1.7h-1.7z M305.3 315.7h1.7v1.7h-1.7z M309.0 315.7h1.7v1.7h-1.7z M312.7 315.7h1.7v1.7h-1.7z M303.4 317.6h1.7v1.7h-1.7z M310.9 317.6h1.7v1.7h-1.7z M312.7 317.6h1.7v1.7h-1.7z M314.6 317.6h1.7v1.7h-1.7z M303.4 319.5h1.7v1.7h-1.7z M310.9 319.5h1.7v1.7h-1.7z M312.7 319.5h1.7v1.7h-1.7z M314.6 319.5h1.7v1.7h-1.7z M316.5 321.3h1.7v1.7h-1.7z M318.3 321.3h1.7v1.7h-1.7z M307.2 323.2h1.7v1.7h-1.7z M312.7 323.2h1.7v1.7h-1.7z M318.3 323.2h1.7v1.7h-1.7z M305.3 325.0h1.7v1.7h-1.7z M310.9 325.0h1.7v1.7h-1.7z M318.3 325.0h1.7v1.7h-1.7z M320.2 325.0h1.7v1.7h-1.7z M309.0 328.8h1.7v1.7h-1.7z M327.6 330.6h1.7v1.7h-1.7z M323.9 332.5h1.7v1.7h-1.7z M329.5 332.5h1.7v1.7h-1.7z M331.3 334.3h1.7v1.7h-1.7z M325.8 338.1h1.7v1.7h-1.7z M335.1 339.9h1.7v1.7h-1.7z M320.2 341.8h1.7v1.7h-1.7z M340.6 343.6h1.7v1.7h-1.7z M318.3 345.5h1.7v1.7h-1.7z M342.5 345.5h1.7v1.7h-1.7z M331.3 347.4h1.7v1.7h-1.7z M344.4 349.2h1.7v1.7h-1.7z M338.8 351.1h1.7v1.7h-1.7z M348.1 351.1h1.7v1.7h-1.7z M353.7 358.5h1.7v1.7h-1.7z M353.7 360.4h1.7v1.7h-1.7z M359.2 362.2h1.7v1.7h-1.7z M342.5 366.0h1.7v1.7h-1.7z" fill="#5e6e6c"/>
<path d="M391.5 416.0 l-9 9 M436.8 463.1 l-9 9 M482.0 512.2 l-9 9 M512.5 416.0 l-9 9 M555.5 467.2 l-9 9 M603.0 516.5 l-9 9 M453.3 379.1 l-9 9" stroke="#b9bdbc" stroke-width="1" opacity="0.8"/>
<path d="M184.8 369.5 l-4.0 -4.0 M142.0 482.0 l-4.8 0.0 M145.0 546.4 l-4.8 0.0 M197.0 653.0 l-4.0 4.0 M242.8 699.0 l-4.0 4.0 M352.6 747.8 l0.0 4.8 M416.6 747.8 l0.0 4.8 M480.7 749.6 l0.0 4.8 M544.8 749.6 l0.0 4.8 M645.5 703.8 l4.0 4.0 M691.0 656.0 l4.0 4.0 M738.5 419.5 l7.2 0.0 M738.0 482.4 l7.2 0.0 M737.0 549.5 l7.2 0.0" stroke="#d8d8d8" stroke-width="1" opacity="0.55"/>
<path d="M23.50 0 V812 M60.72 0 V812 M97.94 0 V812 M135.16 0 V812 M172.38 0 V812 M209.60 0 V812 M246.82 0 V812 M284.04 0 V812 M321.26 0 V812 M358.48 0 V812 M395.70 0 V812 M432.92 0 V812 M470.14 0 V812 M507.36 0 V812 M544.58 0 V812 M581.80 0 V812 M619.02 0 V812 M656.24 0 V812 M693.46 0 V812 M730.68 0 V812 M767.90 0 V812 M0 18.95 H779 M0 56.17 H779 M0 93.39 H779 M0 130.61 H779 M0 167.83 H779 M0 205.05 H779 M0 242.27 H779 M0 279.49 H779 M0 316.71 H779 M0 353.93 H779 M0 391.15 H779 M0 428.37 H779 M0 465.59 H779 M0 502.81 H779 M0 540.03 H779 M0 577.25 H779 M0 614.47 H779 M0 651.69 H779 M0 688.91 H779 M0 726.13 H779 M0 763.35 H779 M0 800.57 H779" stroke="rgb(209,209,214)" stroke-opacity="0.42" stroke-width="1.15" fill="none"/>
<path d="M378.7 54.2 L601.0 56.0 L740.0 196.5 L740.0 260.4" fill="none" stroke="#ff0000" stroke-width="1.35"/>
<path d="M739.0 288.0 L738.5 363.0" fill="none" stroke="#ff0000" stroke-width="1.35"/>
<path d="M427.3 136.4 L425.0 332.1 L538.0 450.0" fill="none" stroke="#ff0000" stroke-width="1.35"/>
<rect x="541.4" y="45.7" width="1.8" height="1.8" fill="#ff0000"/>
<rect x="695.4" y="146.4" width="1.8" height="1.8" fill="#ff0000"/>
<rect x="409.6" y="51.9" width="1.8" height="1.8" fill="#ff0000"/>
<path d="M742.0 267.0 A8.3 8.3 0 0 0 748.0 282.2" fill="none" stroke="#ff0000" stroke-width="1.6"/>
<path d="M742.0 260.8 h9" stroke="#ff0000" stroke-width="1.3" stroke-dasharray="1.5 2"/>
<path d="M400.1 394.2 V403.2" stroke="#ff0000" stroke-width="1.5"/>
<path d="M400.1 394.2 H409.1" stroke="#00ee00" stroke-width="1.5"/>
<rect x="399.4" y="393.5" width="1.5" height="1.5" fill="#0000ff"/>
<g transform="translate(555.0,346.0)">
<circle r="21.1" fill="none" stroke="#6262dc" stroke-width="6"/>
<circle r="21.1" fill="none" stroke="#5050a8" stroke-width="6" stroke-dasharray="2.5 4" opacity="0.3"/>
<g transform="rotate(-39)"><path d="M-3.2 -18.2 L3.2 -18.2 L3.2 -25.6 L-3.2 -25.6 Z" fill="#c03050"/><path d="M-4.5 -25.2 L4.5 -25.2 L0 -33.6 Z" fill="#dd5a55"/></g>
<g transform="rotate(141)"><path d="M-3.2 -18.2 L3.2 -18.2 L3.2 -25.6 L-3.2 -25.6 Z" fill="#7a2a8a"/><path d="M-4.5 -25.2 L4.5 -25.2 L0 -33.6 Z" fill="#dd5a55"/></g>
<g transform="rotate(51)"><path d="M-3.2 -18.2 L3.2 -18.2 L3.2 -25.6 L-3.2 -25.6 Z" fill="#2a7aa0"/><path d="M-4.5 -25.2 L4.5 -25.2 L0 -33.6 Z" fill="#4ccc55"/></g>
<g transform="rotate(-129)"><path d="M-3.2 -18.2 L3.2 -18.2 L3.2 -25.6 L-3.2 -25.6 Z" fill="#25a060"/><path d="M-4.5 -25.2 L4.5 -25.2 L0 -33.6 Z" fill="#4ccc55"/></g>
<g transform="rotate(50)"><rect x="-11.5" y="-7.8" width="23" height="15.6" rx="2.5" fill="#ffe000" stroke="#222" stroke-width="0.6"/><rect x="-11.5" y="-2" width="23" height="4.2" fill="#111"/><rect x="-8" y="-1.6" width="3" height="3" fill="#777"/></g>
</g>
<path d="M531.0 293.0 H577.0" stroke="#f4f4f4" stroke-width="1" stroke-dasharray="2 2.5" opacity="0.8"/>
</svg>
<div class="hdr" style="left:1165px;top:91px;width:271px;height:22px;"></div>
<svg class="a" style="left:1168px;top:97px" width="18" height="12" viewBox="0 0 18 12"><path d="M0.8 1.8 L6.5 6 L0.8 10.2 Z" fill="#3d3d3d"/><rect x="6" y="2" width="11" height="8" rx="2.2" fill="#3d3d3d"/></svg>
<div class="t" style="left:1191px;top:96px;letter-spacing:0.45px;">Views</div>
<svg class="a" style="left:1416.5px;top:93.5px" width="17" height="16"><rect x="0.5" y="0.5" width="16" height="15" rx="2.5" fill="url(#cbg)" stroke="#8f8c87" stroke-width="1"/><path d="M6.6 6.1 L10.4 9.9 M10.4 6.1 L6.6 9.9" stroke="#3a3a3a" stroke-width="1.15"/></svg>
<div class="t" style="left:1167px;top:126px;letter-spacing:0.5px;">Type:</div>
<div class="btn" style="left:1210px;top:119px;width:137px;height:25px;"></div>
<div class="a" style="left:1211px;top:120px;width:114px;height:22px;overflow:hidden;"><div class="t" style="left:4px;top:6px;">TopDownOrtho (orthographic)</div></div>
<svg class="a" style="left:1332px;top:130px" width="12" height="8"><path d="M0.5 0.5 H9 L4.75 4.8 Z" fill="#3c3c3c"/></svg>
<div class="btn" style="left:1354px;top:119px;width:79px;height:25px;"></div>
<div class="t" style="left:1354px;top:126px;width:79px;text-align:center;">Zero</div>
<div class="a" style="left:1165px;top:152px;width:272px;height:718px;box-sizing:border-box;border:1px solid #aaa7a2;border-right:none;background:#fff;"></div>
<div class="a" style="left:1300px;top:153px;width:1px;height:716px;background:#dedede;"></div>
<svg class="a" style="left:1171px;top:158.5px" width="10" height="6"><path d="M0 0 L9 0 L4.5 5.2 Z" fill="#3c3c3c"/></svg>
<div class="a" style="left:1301px;top:153px;width:135px;height:17px;overflow:hidden;"><div class="t" style="left:2px;top:2px;font-weight:bold;letter-spacing:0.4px;">TopDownOrtho ...</div></div>
<div class="t" style="left:1189px;top:155px;font-weight:bold;letter-spacing:0.33px;">Current View</div>
<div class="t" style="left:1209px;top:172px;letter-spacing:0.32px;">Near Clip ...</div>
<div class="t" style="left:1303px;top:172px;letter-spacing:0.23px;">0.01</div>
<div class="t" style="left:1209px;top:189px;letter-spacing:0.42px;">Target Fra...</div>
<div class="t" style="left:1303px;top:189px;letter-spacing:-0.02px;">&lt;Fixed Frame&gt;</div>
<div class="t" style="left:1209px;top:206px;letter-spacing:-0.12px;">Scale</div>
<div class="t" style="left:1303px;top:206px;letter-spacing:0.25px;">37.1999</div>
<div class="t" style="left:1209px;top:223px;letter-spacing:0.80px;">Angle</div>
<div class="t" style="left:1303px;top:223px;letter-spacing:0.32px;">1.5708</div>
<div class="t" style="left:1209px;top:240px;letter-spacing:0.00px;">X</div>
<div class="t" style="left:1303px;top:240px;letter-spacing:0.30px;">0.396188</div>
<div class="t" style="left:1209px;top:257px;letter-spacing:0.00px;">Y</div>
<div class="t" style="left:1303px;top:257px;letter-spacing:0.18px;">-0.158298</div>
<div class="btn" style="left:1167px;top:876px;width:85px;height:25px;"></div>
<div class="t" style="left:1167px;top:882px;width:85px;text-align:center;">Save</div>
<div class="btn" style="left:1258px;top:876px;width:85px;height:25px;"></div>
<div class="t" style="left:1258px;top:882px;width:85px;text-align:center;">Remove</div>
<div class="btn" style="left:1349px;top:876px;width:85px;height:25px;"></div>
<div class="t" style="left:1349px;top:882px;width:85px;text-align:center;">Rename</div>
<svg class="a" style="left:1145px;top:488px" width="20" height="20"><path d="M3 3.5 L8 8.5 L3 13.5 Z" fill="#3a3a3a"/><g fill="#a8a5a0"><rect x="17" y="2" width="1" height="1"/><rect x="17" y="5" width="1" height="1"/><rect x="17" y="8" width="1" height="1"/><rect x="17" y="11" width="1" height="1"/><rect x="17" y="14" width="1" height="1"/><rect x="17" y="17" width="1" height="1"/></g></svg>
<div class="hdr" style="left:0;top:909px;width:1436px;height:21px;"></div>
<svg class="a" style="left:3px;top:912px" width="18" height="18" viewBox="0 0 18 18"><circle cx="8.7" cy="8.9" r="7" fill="#fff" stroke="#3a3a3a" stroke-width="1.6"/><path d="M8.3 4.6 V9.3 H12" fill="none" stroke="#222" stroke-width="1.5"/></svg>
<div class="t" style="left:26px;top:914px;">Time</div>
<svg class="a" style="left:1416.5px;top:911.5px" width="17" height="16"><rect x="0.5" y="0.5" width="16" height="15" rx="2.5" fill="url(#cbg)" stroke="#8f8c87" stroke-width="1"/><path d="M6.6 6.1 L10.4 9.9 M10.4 6.1 L6.6 9.9" stroke="#3a3a3a" stroke-width="1.15"/></svg>
<div class="t" style="left:11px;top:945px;letter-spacing:0.00px;">ROS Time:</div>
<div class="inp" style="left:87px;top:938px;width:142px;height:25px;"></div>
<div class="t" style="left:91px;top:945px;">1710.12</div>
<div class="t" style="left:235px;top:945px;letter-spacing:-0.30px;">ROS Elapsed:</div>
<div class="inp" style="left:331px;top:938px;width:141px;height:25px;"></div>
<div class="t" style="left:335px;top:945px;">75.17</div>
<div class="t" style="left:479px;top:945px;letter-spacing:0.35px;">Wall Time:</div>
<div class="inp" style="left:556px;top:938px;width:142px;height:25px;"></div>
<div class="t" style="left:560px;top:945px;">1597094414.59</div>
<div class="t" style="left:704px;top:945px;letter-spacing:0.10px;">Wall Elapsed:</div>
<div class="inp" style="left:800px;top:938px;width:142px;height:25px;"></div>
<div class="t" style="left:804px;top:945px;">87.14</div>
<div class="cb" style="left:1309px;top:943.7px;"></div>
<div class="t" style="left:1328px;top:945px;letter-spacing:0.6px;">Experimental</div>
<div class="btn" style="left:2px;top:974px;width:53px;height:24px;"></div>
<div class="t" style="left:9px;top:980px;">Reset</div>
<div class="t" style="left:62px;top:978px;letter-spacing:0.08px;"><b style="font-size:15px">Left-Click:</b> Rotate. <b style="font-size:15px">Middle-Click:</b> Move X/Y. <b style="font-size:15px">Right-Click:</b>: Zoom. <b style="font-size:15px">Shift</b>: More options.</div>
<div class="t" style="left:1370.5px;top:976px;letter-spacing:0.4px;">31 fps</div>
<svg class="a" style="left:1422px;top:986px" width="14" height="14"><g fill="#bdbab5"><rect x="11" y="2" width="1" height="1"/><rect x="8" y="5" width="1" height="1"/><rect x="11" y="5" width="1" height="1"/><rect x="5" y="8" width="1" height="1"/><rect x="8" y="8" width="1" height="1"/><rect x="11" y="8" width="1" height="1"/><rect x="2" y="11" width="1" height="1"/><rect x="5" y="11" width="1" height="1"/><rect x="8" y="11" width="1" height="1"/><rect x="11" y="11" width="1" height="1"/></g></svg>
</body></html>
